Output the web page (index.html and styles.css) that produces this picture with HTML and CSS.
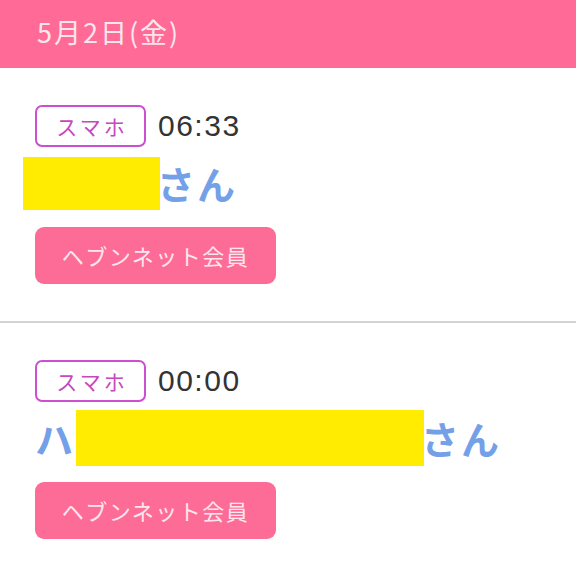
FILE: index.html
```html
<!DOCTYPE html>
<html lang="ja">
<head>
<meta charset="utf-8">
<link rel="stylesheet" href="styles.css">
</head>
<body>
<header class="date-bar">5月2日(金)</header>
<section class="entry">
  <div class="meta">
    <span class="badge">スマホ</span>
    <span class="time">06:33</span>
  </div>
  <div class="name">
    <span class="redact redact-1"></span><span class="san after">さん</span>
  </div>
  <button class="member">ヘブンネット会員</button>
</section>
<section class="entry">
  <div class="meta">
    <span class="badge">スマホ</span>
    <span class="time">00:00</span>
  </div>
  <div class="name">
    <span class="san first">ハ</span><span class="redact redact-2"></span><span class="san after">さん</span>
  </div>
  <button class="member">ヘブンネット会員</button>
</section>
</body>
</html>
```
FILE: styles.css
```css
* { box-sizing: border-box; }
html, body { margin: 0; padding: 0; background: #fff; }
body {
  width: 576px;
  font-family: "Noto Sans CJK JP", "Noto Sans", sans-serif;
  color: #333;
}
.date-bar {
  height: 68px;
  background: #ff6b96;
  color: #fce6ee;
  font-size: 27px;
  letter-spacing: 2px;
  padding-left: 37px;
  padding-bottom: 6px;
  display: flex;
  align-items: center;
}
.entry {
  padding: 37px 0 37px 35px;
  border-bottom: 2px solid #d3d3d3;
}
.entry:last-child { border-bottom: none; }
.meta {
  display: flex;
  align-items: center;
  gap: 12px;
  height: 42px;
}
.badge {
  width: 111px;
  height: 42px;
  border: 2px solid #cc4fd2;
  border-radius: 7px;
  color: #c548bd;
  font-size: 21px;
  display: flex;
  align-items: center;
  justify-content: center;
  letter-spacing: 3px;
  padding-left: 3px;
}
.time {
  font-family: "Liberation Sans", "Noto Sans", sans-serif;
  font-size: 30px;
  letter-spacing: 1.5px;
  color: #333;
}
.name {
  display: flex;
  align-items: center;
  height: 56px;
  margin-top: 8px;
}
.redact { background: #ffec00; display: inline-block; }
.redact-1 { width: 137px; height: 53px; margin-left: -12px; }
.redact-2 { width: 348px; height: 56px; margin-left: 1px; }
.san {
  color: #74a0e8;
  font-size: 38px;
  font-weight: bold;
  letter-spacing: 2px;
  padding-bottom: 2px;
}
.san.after { margin-left: -3px; }
.member {
  display: block;
  margin-top: 16px;
  width: 241px;
  height: 57px;
  border: none;
  border-radius: 9px;
  background: #fd6c96;
  color: #fde6ee;
  font-family: "Noto Sans CJK JP", "Noto Sans", sans-serif;
  font-size: 22px;
  padding: 0 0 2px 0;
  letter-spacing: 1.5px;
}
```
